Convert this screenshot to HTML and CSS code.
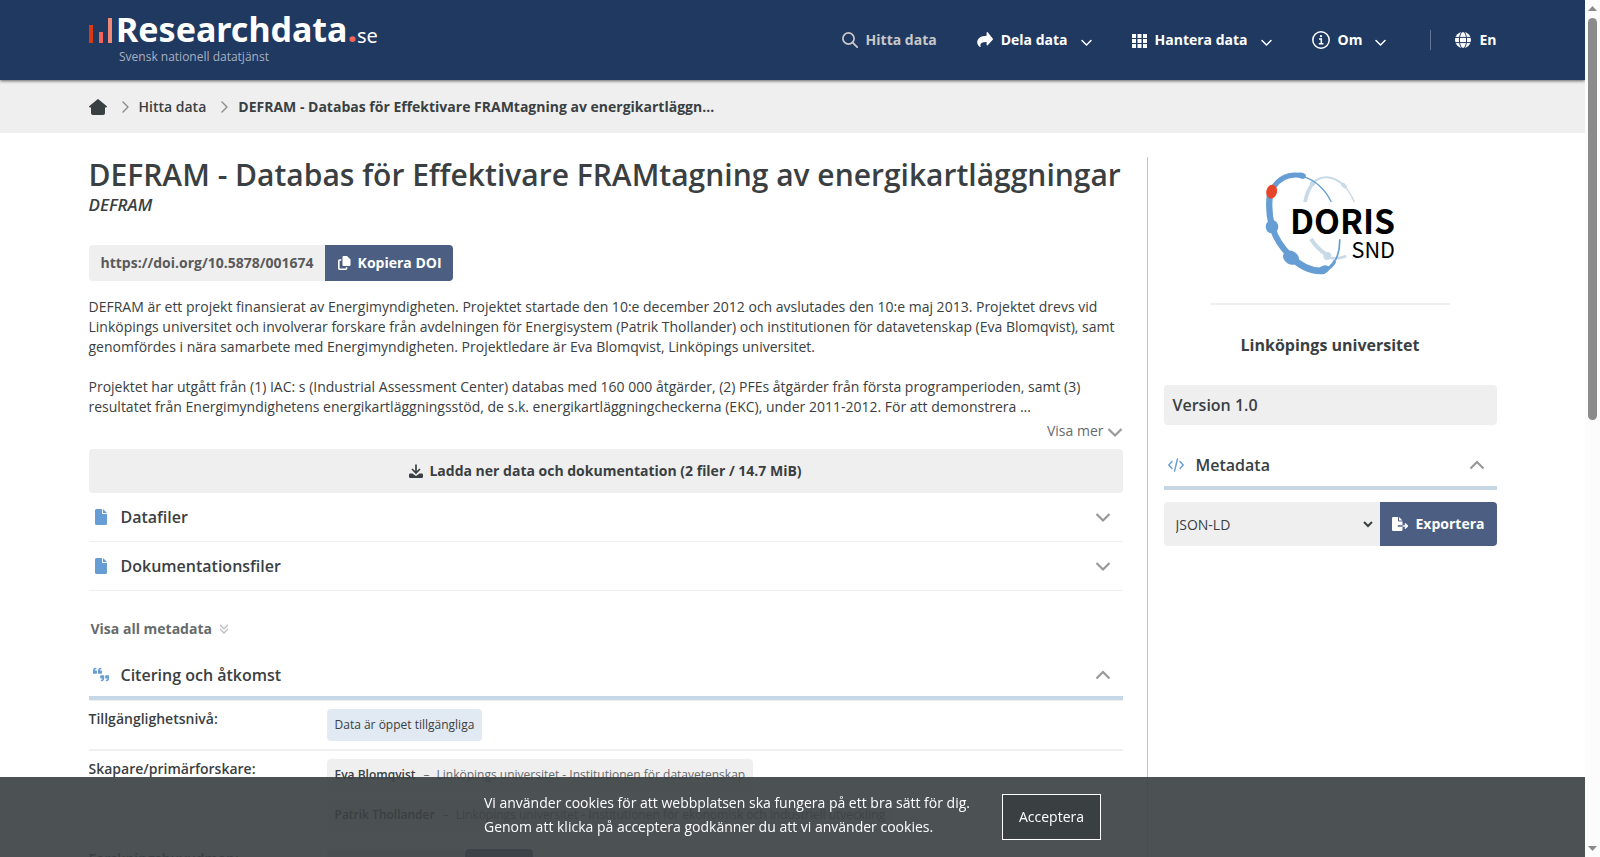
FILE: index.html
```html
<!DOCTYPE html>
<html lang="sv">

<head>
	<title>DEFRAM - Databas för Effektivare FRAMtagning av energikartläggningar | Researchdata.se</title>
	<meta charset="utf-8">
	<meta name="viewport" content="width=device-width, initial-scale=1.0">
	<link rel="stylesheet" href="styles.css">
</head>

<body>
	<!-- shared icons -->
	<svg class="sprite" aria-hidden="true">
		<symbol id="chevron" viewBox="0 0 16 16">
			<path d="M1.5 5L8 11.500 14.500 5" fill="none" stroke="currentColor" stroke-width="2.200" />
		</symbol>
		<symbol id="chevron-up" viewBox="0 0 16 16">
			<path d="M1.500 11.500L8 5l6.500 6.500" fill="none" stroke="currentColor" stroke-width="2.200" />
		</symbol>
		<symbol id="chevron-right" viewBox="0 0 8 14">
			<path d="M1 2l5 5-5 5" fill="none" stroke="currentColor" stroke-width="1.4" stroke-linecap="round" stroke-linejoin="round" />
		</symbol>
		<symbol id="file" viewBox="0 0 12 16">
			<path d="M1.5 0H7v4a1 1 0 0 0 1 1h4v9.5a1.5 1.5 0 0 1-1.5 1.5h-9A1.5 1.5 0 0 1 0 14.5v-13A1.5 1.5 0 0 1 1.5 0zM8 0l4 4H8z" fill="currentColor" />
		</symbol>
	</svg>

	<div class="page">
		<header class="header">
			<div class="container header-inner">
				<a class="logo" href="#">
					<svg width="290" height="60" viewBox="0 0 290 60" role="img" aria-label="Researchdata.se">
						<rect x="0" y="15" width="4" height="18" fill="#dc3912" />
						<rect x="10" y="22" width="4" height="11" fill="#f4645c" />
						<rect x="19" y="8" width="4" height="25" fill="#f08878" />
						<text class="logo-name" x="27" y="32">Researchdata<tspan class="logo-dot">.</tspan></text>
						<text class="logo-tld" x="268" y="33">se</text>
						<text class="logo-tagline" x="30" y="51">Svensk nationell datatjänst</text>
					</svg>
				</a>
				<nav class="nav">
					<a class="nav-item active" href="#">
						<svg width="16" height="16" viewBox="0 0 16 16"><circle cx="6.5" cy="6.5" r="5.6" fill="none" stroke="currentColor" stroke-width="1.7" /><path d="M10.7 10.7l4.5 4.5" stroke="currentColor" stroke-width="1.9" stroke-linecap="round" /></svg>
						Hitta data
					</a>
					<button class="nav-item">
						<svg width="16" height="16" viewBox="0 0 16 16"><path d="M9.600.800v3C4 3.900.2 6.200.2 10.600c0 1.900 1.200 3.500 2.700 4.400.5.300.9 0 .7-.5C2.700 11.300 4.600 10.100 9.600 10v2.800c0 .6.700.900 1.100.5l5-5.500a.9.900 0 0 0 0-1.300l-5-6.200c-.4-.4-1.100-.1-1.100.5z" fill="currentColor" /></svg>
						Dela data
						<svg class="nav-chevron" width="11" height="8" viewBox="0 0 11 8"><path d="M1 1.500l4.500 4.500L10 1.500" fill="none" stroke="currentColor" stroke-width="1.500" stroke-linecap="round" /></svg>
					</button>
					<button class="nav-item">
						<svg width="15" height="15" viewBox="0 0 15 15"><path d="M0 1h4v4H0zM5.500 1h4v4h-4zM11 1h4v4h-4zM0 6h4v4H0zM5.500 6h4v4h-4zM11 6h4v4h-4zM0 11h4v4H0zM5.500 11h4v4h-4zM11 11h4v4h-4z" fill="currentColor" /></svg>
						Hantera data
						<svg class="nav-chevron" width="11" height="8" viewBox="0 0 11 8"><path d="M1 1.500l4.500 4.500L10 1.500" fill="none" stroke="currentColor" stroke-width="1.500" stroke-linecap="round" /></svg>
					</button>
					<button class="nav-item">
						<svg width="18" height="18" viewBox="0 0 18 18"><circle cx="9" cy="9" r="8.200" fill="none" stroke="currentColor" stroke-width="1.500" /><path d="M7 8h2.300v4.500M6.800 12.700h4.600" fill="none" stroke="currentColor" stroke-width="1.500" /><circle cx="9" cy="5.200" r="1.100" fill="currentColor" /></svg>
						Om
						<svg class="nav-chevron" width="11" height="8" viewBox="0 0 11 8"><path d="M1 1.500l4.500 4.500L10 1.500" fill="none" stroke="currentColor" stroke-width="1.500" stroke-linecap="round" /></svg>
					</button>
					<a class="nav-item language" href="#">
						<svg width="16" height="16" viewBox="0 0 16 16"><circle cx="8" cy="8" r="8" fill="currentColor" /><path d="M0 5.400h16M0 10.600h16" stroke="#203961" stroke-width="1" /><ellipse cx="8" cy="8" rx="3.600" ry="8.500" fill="none" stroke="#203961" stroke-width="1" /></svg>
						En
					</a>
				</nav>
			</div>
		</header>

		<nav class="breadcrumb" aria-label="Brödsmulor">
			<ol class="container breadcrumb-list">
				<li>
					<a href="#" aria-label="Hem">
						<svg width="18" height="16" viewBox="0 0 18 16"><path d="M8.300.4L.4 7.100c-.6.6-.3 1.400.5 1.400H2v5.700A1.800 1.800 0 0 0 3.800 16h10.400a1.800 1.800 0 0 0 1.800-1.800V8.500h1.100c.8 0 1.100-.8.5-1.400L9.700.4a1.100 1.100 0 0 0-1.400 0z" fill="currentColor" /></svg>
					</a>
				</li>
				<li><svg class="separator" width="8" height="14"><use href="#chevron-right" /></svg><a href="#">Hitta data</a></li>
				<li><svg class="separator" width="8" height="14"><use href="#chevron-right" /></svg><strong>DEFRAM - Databas för Effektivare FRAMtagning av energikartläggn...</strong></li>
			</ol>
		</nav>

		<div class="container columns">
			<main class="content">
				<h1 class="title">DEFRAM - Databas för Effektivare FRAMtagning av energikartläggningar</h1>
				<p class="subtitle">DEFRAM</p>

				<div class="doi">
					<span class="doi-link">https://doi.org/10.5878/001674</span>
					<button class="doi-copy">
						<svg width="13" height="14" viewBox="0 0 13 14"><path d="M5.500 0H9l3.500 3.400V9a1 1 0 0 1-1 1h-6a1 1 0 0 1-1-1V1a1 1 0 0 1 1-1z" fill="currentColor" /><path d="M3.300 4H1.700a.9.9 0 0 0-.9.900v7.400c0 .5.400.9.900.9h6a.9.9 0 0 0 .9-.9v-1" fill="none" stroke="currentColor" stroke-width="1.600" /></svg>
						Kopiera DOI
					</button>
				</div>

				<div class="description">
					<p>DEFRAM är ett projekt finansierat av Energimyndigheten. Projektet startade den 10:e december 2012 och avslutades den 10:e maj 2013. Projektet drevs vid Linköpings universitet och involverar forskare från avdelningen för Energisystem (Patrik Thollander) och institutionen för datavetenskap (Eva Blomqvist), samt genomfördes i nära samarbete med Energimyndigheten. Projektledare är Eva Blomqvist, Linköpings universitet.</p>
					<p>Projektet har utgått från (1) IAC: s (Industrial Assessment Center) databas med 160 000 åtgärder, (2) PFEs åtgärder från första programperioden, samt (3) resultatet från Energimyndighetens energikartläggningsstöd, de s.k. energikartläggningcheckerna (EKC), under 2011-2012. För att demonstrera ...</p>
				</div>
				<button class="show-more">Visa mer <svg width="16" height="16"><use href="#chevron" /></svg></button>

				<button class="download">
					<svg width="14" height="14" viewBox="0 0 14 14"><path d="M7 .5v8M3 5l4 4 4-4" fill="none" stroke="currentColor" stroke-width="1.700" /><path d="M1.300 9.500h2.200L7 12l3.500-2.500h2.200A1.300 1.300 0 0 1 14 10.800v1.900a1.300 1.300 0 0 1-1.300 1.300H1.300A1.300 1.300 0 0 1 0 12.700v-1.900a1.300 1.300 0 0 1 1.300-1.300z" fill="currentColor" /></svg>
					Ladda ner data och dokumentation (2 filer / 14.7 MiB)
				</button>

				<button class="accordion">
					<svg class="accordion-icon" width="16" height="16"><use href="#file" /></svg>
					<span class="accordion-label">Datafiler</span>
					<svg class="accordion-chevron" width="16" height="16"><use href="#chevron" /></svg>
				</button>
				<button class="accordion">
					<svg class="accordion-icon" width="16" height="16"><use href="#file" /></svg>
					<span class="accordion-label">Dokumentationsfiler</span>
					<svg class="accordion-chevron" width="16" height="16"><use href="#chevron" /></svg>
				</button>

				<button class="show-all">
					Visa all metadata
					<svg width="10" height="10" viewBox="0 0 10 10"><path d="M1 .800l4 4 4-4M1 5l4 4 4-4" fill="none" stroke="currentColor" stroke-width="1.300" /></svg>
				</button>

				<button class="accordion open">
					<svg class="accordion-icon" width="16" height="16" viewBox="0 0 16 16"><g fill="currentColor"><path id="quote" d="M0 5.800V3.500C0 1.900 1.200.800 2.900.800h.500v1.400h-.500c-.7 0-1.100.5-1.100 1.200h1.500c.4 0 .7.300.7.700v1.900c0 .4-.3.700-.7.700H.700a.7.700 0 0 1-.7-.9z" /><use href="#quote" x="5" /><path id="quote-end" d="M11.200 9v2.400c0 1.600-1.200 2.800-2.800 2.800h-.5v-1.400h.5c.7 0 1.200-.5 1.200-1.200H7.900a.7.700 0 0 1-.7-.7V9c0-.4.300-.7.700-.7h2.600c.4 0 .7.300.7.700z" /><use href="#quote-end" x="5" /></g></svg>
					<span class="accordion-label">Citering och åtkomst</span>
					<svg class="accordion-chevron" width="16" height="16"><use href="#chevron-up" /></svg>
				</button>

				<dl class="metadata">
					<div class="metadata-row">
						<dt>Tillgänglighetsnivå:</dt>
						<dd><span class="tag blue">Data är öppet tillgängliga</span></dd>
					</div>
					<div class="metadata-row">
						<dt>Skapare/primärforskare:</dt>
						<dd>
							<span class="tag"><b>Eva Blomqvist</b><i>–</i>Linköpings universitet - Institutionen för datavetenskap</span>
							<span class="tag"><b>Patrik Thollander</b><i>–</i>Linköpings universitet - Institutionen för ekonomisk och industriell utveckling</span>
						</dd>
					</div>
					<div class="metadata-row">
						<dt>Forskningshuvudman:</dt>
						<dd><span class="tag-group"><a class="tag blue" href="#">Linköpings universitet</a><a class="tag dark" href="#">ROR</a></span></dd>
					</div>
				</dl>
			</main>

			<aside class="sidebar">
				<svg class="doris" width="132" height="104" viewBox="403 95 396 312" role="img" aria-label="DORIS SND">
					<g fill="none" stroke="#c8dae6">
						<path d="M526 188Q532 154 550 132" stroke-width="11" />
						<path d="M548 132Q568 113 592 114Q620 116 642 138" stroke-width="6" />
						<path d="M642 138Q660 156 674 188" stroke-width="4" />
						<path d="M544 299Q562 328 592 347" stroke-width="12" />
						<path d="M592 354Q620 362 650 350" stroke-width="8" />
					</g>
					<g fill="#c8dae6">
						<circle cx="549" cy="132" r="8" />
						<ellipse cx="643" cy="139" rx="10" ry="6" transform="rotate(45 643 139)" />
						<circle cx="593" cy="350" r="12" />
					</g>
					<g fill="none" stroke="#659dd4">
						<path d="M522 112Q576 130 605 188" stroke-width="4" />
						<path d="M518 109Q462 99 432 143" stroke-width="15" />
						<path d="M421 165Q414 212 427 262" stroke-width="19" />
						<path d="M427 262Q442 312 484 352" stroke-width="18" />
						<path d="M484 352Q530 400 584 394" stroke-width="20" />
						<path d="M584 392Q632 370 630 300" stroke-width="5" />
						<path d="M584 393Q605 387 616 365" stroke-width="9" />
					</g>
					<g fill="#659dd4">
						<ellipse cx="516" cy="109" rx="13" ry="9" transform="rotate(15 516 109)" />
						<ellipse cx="427" cy="262" rx="19" ry="20" />
						<ellipse cx="484" cy="355" rx="25" ry="20" transform="rotate(30 484 355)" />
						<ellipse cx="582" cy="391" rx="18" ry="12" transform="rotate(-20 582 391)" />
					</g>
					<ellipse cx="426" cy="157" rx="16" ry="21" fill="#e6452a" transform="rotate(12 426 157)" />
					<text class="doris-name" x="796" y="283" text-anchor="end">DORIS</text>
					<text class="doris-org" x="796" y="355" text-anchor="end">SND</text>
				</svg>
				<hr class="rule">
				<p class="organisation">Linköpings universitet</p>
				<div class="version">Version 1.0</div>
				<button class="accordion open">
					<svg class="accordion-icon" width="16" height="16" viewBox="0 0 16 16"><path d="M4 4.500L.8 8 4 11.500M12 4.500L15.200 8 12 11.500M9.500 2l-3 12" fill="none" stroke="currentColor" stroke-width="1.400" stroke-linecap="round" stroke-linejoin="round" /></svg>
					<span class="accordion-label">Metadata</span>
					<svg class="accordion-chevron" width="16" height="16"><use href="#chevron-up" /></svg>
				</button>
				<form class="export">
					<select class="export-format" aria-label="Format">
						<option>JSON-LD</option>
					</select>
					<button class="export-button" type="button">
						<svg width="16" height="14" viewBox="0 0 16 14"><path d="M1.300 0H6v3.500a.9.900 0 0 0 .9.900h3.600v3.800H5.800v1.600h4.700v2.900a1.300 1.300 0 0 1-1.300 1.300H1.300A1.300 1.300 0 0 1 0 12.700V1.300A1.300 1.300 0 0 1 1.300 0zM7 0l3.500 3.500H7z" fill="currentColor" /><path d="M10.500 9h4.500M12.900 6.500L15.400 9l-2.500 2.500" fill="none" stroke="currentColor" stroke-width="1.400" /></svg>
						Exportera
					</button>
				</form>
			</aside>
		</div>
	</div>

	<div class="cookies">
		<p class="cookies-text">Vi använder cookies för att webbplatsen ska fungera på ett bra sätt för dig.<br>Genom att klicka på acceptera godkänner du att vi använder cookies.</p>
		<button class="cookies-accept">Acceptera</button>
	</div>

	<div class="scrollbar" aria-hidden="true">
		<svg width="9" height="5" viewBox="0 0 9 5"><path d="M0 5L4.500 0 9 5z" fill="#8b8b8b" /></svg>
		<div class="scrollbar-track"><div class="scrollbar-thumb"></div></div>
		<svg width="9" height="5" viewBox="0 0 9 5"><path d="M0 0l4.500 5L9 0z" fill="#8b8b8b" /></svg>
	</div>
</body>

</html>
```
FILE: styles.css
```css
* {
	box-sizing: border-box;
}

body {
	margin: 0;
	height: 100vh;
	overflow: hidden;
	padding-right: 15px;
	background: #fff;
	color: #3a4042;
	font-family: "Open Sans", sans-serif;
	font-size: 14px;
	line-height: 20px;
}

p, h1, dl, dd, ol {
	margin: 0;
	padding: 0;
}

a {
	color: inherit;
	text-decoration: none;
}

button {
	border: 0;
	padding: 0;
	background: none;
	color: inherit;
	font: inherit;
	cursor: pointer;
}

svg {
	flex: none;
	display: block;
}

.sprite {
	position: absolute;
	width: 0;
	height: 0;
}

.container {
	max-width: 1408px;
	margin: 0 auto;
}

/* header */
.header {
	position: relative;
	background: #203961;
	color: #fff;
	box-shadow: 0 1px 3px rgba(0, 0, 0, 0.6);
}

.header-inner {
	display: flex;
	justify-content: space-between;
	align-items: center;
	height: 80px;
}

.logo svg {
	overflow: visible;
}

.logo-name {
	fill: #fff;
	font: 700 34px "Noto Sans", sans-serif;
}

.logo-dot {
	fill: #f4645c;
}

.logo-tld {
	fill: #fff;
	font: 400 20px "Noto Sans", sans-serif;
}

.logo-tagline {
	fill: #a6b0c0;
	font: 400 12px "Open Sans", sans-serif;
}

.nav {
	display: flex;
	align-items: center;
	gap: 40px;
}

.nav-item {
	display: flex;
	align-items: center;
	gap: 8px;
	font-weight: 700;
}

.nav-item.active {
	color: #c8c8c8;
}

.nav-chevron {
	margin: 6px 0 0 5px;
}

.language {
	border-left: 1px solid #66758f;
	padding-left: 24px;
	margin-left: 4px;
}

/* breadcrumb */
.breadcrumb {
	background: #efefef;
}

.breadcrumb-list {
	display: flex;
	align-items: center;
	height: 53px;
	list-style: none;
	font-weight: 600;
}

.breadcrumb-list li {
	display: flex;
	align-items: center;
}

.breadcrumb-list strong {
	font-weight: 700;
}

.separator {
	margin: 0 9px 0 15px;
	color: #8b8b8b;
}

/* columns */
.columns {
	display: grid;
	grid-template-columns: minmax(0, 1fr) 350px;
	gap: 24px;
	padding-top: 24px;
}

.title {
	font-size: 30px;
	line-height: 36px;
	font-weight: 600;
}

.subtitle {
	margin-bottom: 28px;
	font-size: 17px;
	line-height: 24px;
	font-style: italic;
	font-weight: 600;
}

.doi {
	display: flex;
	font-weight: 700;
	line-height: 36px;
}

.doi-link {
	padding: 0 11px 0 12px;
	border-radius: 4px 0 0 4px;
	background: #efefef;
	color: #5a5a5a;
}

.doi-copy {
	display: flex;
	align-items: center;
	gap: 7px;
	padding: 0 11px 0 13px;
	border-radius: 0 4px 4px 0;
	background: #4c5f83;
	color: #fff;
}

.description {
	display: flex;
	flex-direction: column;
	gap: 20px;
	margin-top: 16px;
}

.show-more {
	display: flex;
	align-items: center;
	gap: 3px;
	margin: 4px 0 8px auto;
	color: #666b6d;
}

.show-more svg {
	margin-top: 2px;
}

.show-more svg,
.accordion-chevron {
	color: #999;
}

.download {
	display: flex;
	align-items: center;
	justify-content: center;
	gap: 6px;
	width: 100%;
	height: 44px;
	border-radius: 4px;
	background: #efefef;
	font-weight: 700;
}

.accordion {
	display: flex;
	align-items: center;
	gap: 12px;
	width: 100%;
	height: 49px;
	padding: 0 12px 0 4px;
	border-bottom: 1px solid #efefef;
	font-size: 16px;
	font-weight: 600;
	text-align: left;
}

.accordion-icon {
	color: #659dd4;
}

.accordion-label {
	flex: 1;
}

.accordion.open {
	padding-top: 3px;
	border-bottom: 4px solid #c6d8e6;
}

.show-all {
	display: flex;
	align-items: center;
	gap: 7px;
	margin: 28px 0 12px;
	padding: 0 2px;
	height: 20px;
	color: #666b6d;
	font-weight: 700;
}

.show-all svg {
	color: #c0c0c0;
}

/* metadata */
.metadata {
	border-top: 1px solid #efefef;
}

.metadata-row {
	display: grid;
	grid-template-columns: 238px 1fr;
	padding: 8px 0;
	border-bottom: 2px solid #efefef;
}

.metadata dt {
	font-weight: 600;
}

.metadata dd {
	display: flex;
	flex-direction: column;
	align-items: flex-start;
	gap: 8px;
}

.tag {
	padding: 0 8px;
	border-radius: 4px;
	background: #efefef;
	color: #666b6d;
	font-size: 12px;
	line-height: 32px;
}

.tag b {
	color: #3a4042;
	font-weight: 600;
}

.tag i {
	margin: 0 7px 0 8px;
	font-style: normal;
}

.tag.blue {
	background: #e1e9f2;
	color: #3a4042;
}

.tag.dark {
	padding: 0 22px;
	background: #4c5f83;
	color: #fff;
}

.tag-group {
	display: flex;
}

/* sidebar */
.sidebar {
	min-height: 720px;
	padding: 14px 0 0 16px;
	border-left: 1px solid #c8c8c8;
}

.doris {
	margin: 0 auto;
}

.doris-name {
	font: 700 101px "Noto Sans CJK SC", sans-serif;
}

.doris-org {
	font: 400 65px "Noto Sans CJK SC", sans-serif;
}

.rule {
	width: 240px;
	height: 2px;
	margin: 28px auto;
	border: 0;
	background: #efefef;
}

.organisation {
	font-size: 16px;
	line-height: 24px;
	font-weight: 700;
	text-align: center;
}

.version {
	margin: 28px 0 16px;
	padding: 0 9px;
	border-radius: 4px;
	background: #efefef;
	font-size: 16px;
	line-height: 40px;
	font-weight: 600;
}

.export {
	display: flex;
	height: 44px;
	margin-top: 12px;
}

.export-format {
	flex: 1;
	border: 4px solid #efefef;
	border-radius: 4px 0 0 4px;
	padding: 0 4px;
	background: #efefef;
	color: #3a4042;
	font: inherit;
}

.export-button {
	display: flex;
	align-items: center;
	gap: 8px;
	padding: 0 12px;
	border-radius: 0 4px 4px 0;
	background: #4c5f83;
	color: #fff;
	font-weight: 700;
}

/* cookie bar */
.cookies {
	position: fixed;
	left: 0;
	right: 15px;
	bottom: 0;
	display: flex;
	align-items: center;
	justify-content: center;
	gap: 32px;
	height: 80px;
	background: rgba(58, 64, 66, 0.91);
	color: #fff;
	line-height: 24px;
}

.cookies-text {
	padding-bottom: 4px;
}

.cookies-accept {
	height: 46px;
	padding: 0 16px;
	border: 1px solid #fff;
	background: #3a4042;
}

/* scrollbar */
.scrollbar {
	position: fixed;
	top: 0;
	right: 0;
	bottom: 0;
	display: flex;
	flex-direction: column;
	align-items: center;
	gap: 7px;
	width: 15px;
	padding: 6px 0;
	background: #fcfcfc;
}

.scrollbar-track {
	flex: 1;
}

.scrollbar-thumb {
	width: 9px;
	height: 49%;
	border-radius: 5px;
	background: #8b8b8b;
}
```
